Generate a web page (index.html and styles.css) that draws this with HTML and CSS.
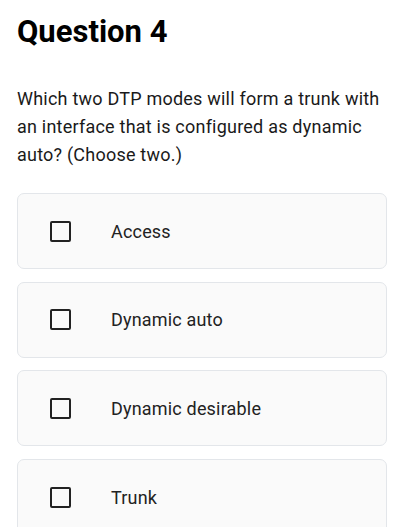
FILE: index.html
```html
<!DOCTYPE html>
<html lang="en">
<head>
<meta charset="utf-8">
<link rel="stylesheet" href="styles.css">
</head>
<body>
<main class="page">
  <h1 class="title">Question 4</h1>
  <p class="question">Which two DTP modes will form a trunk with an interface that is configured as dynamic auto? (Choose two.)</p>
  <ul class="options">
    <li class="option"><span class="box"></span><span class="label">Access</span></li>
    <li class="option"><span class="box"></span><span class="label">Dynamic auto</span></li>
    <li class="option"><span class="box"></span><span class="label">Dynamic desirable</span></li>
    <li class="option"><span class="box"></span><span class="label">Trunk</span></li>
  </ul>
</main>
</body>
</html>
```
FILE: styles.css
```css
html, body {
  margin: 0;
  padding: 0;
  background: #ffffff;
}
body {
  font-family: Roboto, "Noto Sans", sans-serif;
  color: #111111;
}
.page {
  padding: 14px 27px 0 17px;
}
.title {
  margin: 0;
  font-size: 31px;
  line-height: 36px;
  font-weight: 700;
  color: #000000;
}
.question {
  margin: 35px 0 0 0;
  font-size: 18px;
  line-height: 28px;
  letter-spacing: 0.22px;
  color: #1a1a1a;
}
.options {
  list-style: none;
  margin: 24px 0 0 0;
  padding: 0;
  display: flex;
  flex-direction: column;
  gap: 12.7px;
}
.option {
  box-sizing: border-box;
  height: 76px;
  display: flex;
  align-items: center;
  padding-left: 32px;
  background: #fafafa;
  border: 1px solid #e3e6ea;
  border-radius: 7px;
}
.box {
  box-sizing: border-box;
  width: 21px;
  height: 21px;
  border: 2.5px solid #222222;
  border-radius: 2px;
  flex: none;
}
.label {
  margin-left: 40px;
  font-size: 18px;
  letter-spacing: 0.18px;
  color: #222222;
}
```
